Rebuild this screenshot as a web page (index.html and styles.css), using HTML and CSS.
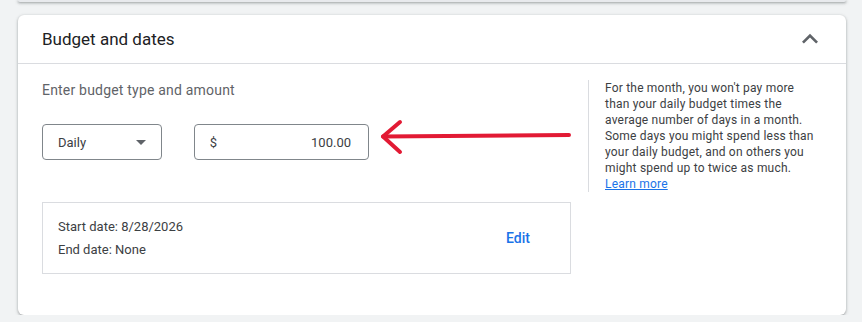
FILE: index.html
```
<!DOCTYPE html>
<html lang="en">
  <head>
    <meta charset="UTF-8" />
    <meta name="viewport" content="width=device-width, initial-scale=1.0" />
    <title>Budget and dates</title>
    <link rel="stylesheet" href="styles.css">
  </head>

  <body>
    <div class="prev-card"></div>

    <div class="card">
      <div class="card-head">
        <h2 class="card-title">Budget and dates</h2>
        <svg class="collapse" width="32" height="32" viewBox="0 0 24 24">
          <path d="M12 8l-6 6 1.41 1.41L12 10.83l4.59 4.58L18 14z" fill="#5f6368" />
        </svg>
      </div>

      <div class="card-body">
        <div class="budget">
          <div class="label">Enter budget type and amount</div>

          <div class="fields">
            <div class="select">
              <span>Daily</span>
              <span class="caret"></span>
            </div>
            <div class="amount">
              <span>$</span>
              <span>100.00</span>
            </div>
            <!-- annotation arrow -->
            <svg class="arrow" width="192" height="44" viewBox="0 0 192 44">
              <g fill="none" stroke="#e21a34" stroke-width="4" stroke-linecap="round" stroke-linejoin="round">
                <path d="M190 15 L4 16.5" />
                <path d="M21 2 L4 16.5 L21 32" />
              </g>
            </svg>
          </div>

          <div class="dates">
            <div class="dates-text">
              <div>Start date: 8/28/2026</div>
              <div class="end">End date: None</div>
            </div>
            <a class="edit">Edit</a>
          </div>
        </div>

        <div class="help">
          For the month, you won't pay more<br>
          than your daily budget times the<br>
          average number of days in a month.<br>
          Some days you might spend less than<br>
          your daily budget, and on others you<br>
          might spend up to twice as much.
          <a class="learn">Learn more</a>
        </div>
      </div>
    </div>
  </body>
</html>
```

FILE: styles.css
```
* {
  margin: 0;
  padding: 0;
  box-sizing: border-box;
}

body {
  background-color: #f1f3f4;
  font-family: Roboto, "Liberation Sans", Arial, sans-serif;
  color: #3c4043;
}

.prev-card {
  width: 828px;
  height: 2px;
  margin-left: 18px;
  background-color: #e8eaed;
  border-radius: 0 0 6px 6px;
  box-shadow: 0 1px 2px rgba(60, 64, 67, 0.3), 0 1px 3px 1px rgba(60, 64, 67, 0.15);
}

.card {
  width: 828px;
  margin: 13px 0 0 18px;
  background-color: #fff;
  border-radius: 6px;
  box-shadow: 0 1px 2px rgba(60, 64, 67, 0.3), 0 1px 3px 1px rgba(60, 64, 67, 0.15);
}

.card-head {
  display: flex;
  align-items: center;
  justify-content: space-between;
  height: 49px;
  padding: 0 20px 0 24px;
  border-bottom: 1px solid #dadce0;
}

.card-title {
  font-size: 17px;
  font-weight: 400;
  color: #202124;
}

.card-body {
  display: flex;
  padding: 16px 21px 41px 24px;
}

.budget {
  width: 529px;
}

.label {
  font-size: 14px;
  line-height: 20px;
  letter-spacing: 0.2px;
  color: #5f6368;
}

.fields {
  display: flex;
  align-items: center;
  margin-top: 24px;
}

.select,
.amount {
  display: flex;
  align-items: center;
  justify-content: space-between;
  height: 36px;
  border: 1px solid #80868b;
  border-radius: 4px;
  font-size: 13px;
  color: #3c4043;
}

.select {
  width: 120px;
  padding: 0 15px 0 15px;
}

.caret {
  width: 0;
  height: 0;
  border-left: 5px solid transparent;
  border-right: 5px solid transparent;
  border-top: 5px solid #5f6368;
}

.amount {
  width: 176px;
  margin-left: 32px;
  padding: 0 17px 0 15px;
}

.arrow {
  margin: -4px 0 -4px 10px;
  overflow: visible;
}

.dates {
  display: flex;
  align-items: center;
  justify-content: space-between;
  height: 72px;
  margin-top: 42px;
  padding: 0 40px 0 15px;
  border: 1px solid #dadce0;
  font-size: 13px;
  line-height: 20px;
}

.dates .end {
  margin-top: 3px;
}

.edit {
  font-size: 14px;
  font-weight: 500;
  color: #1a73e8;
  cursor: pointer;
}

.help {
  width: 254px;
  margin-left: 17px;
  padding-left: 16px;
  border-left: 1px solid #dadce0;
  font-size: 12px;
  line-height: 16px;
  letter-spacing: 0.2px;
  color: #3c4043;
  white-space: nowrap;
  align-self: flex-start;
}

.learn {
  display: block;
  color: #1a73e8;
  text-decoration: underline;
  cursor: pointer;
}
```
